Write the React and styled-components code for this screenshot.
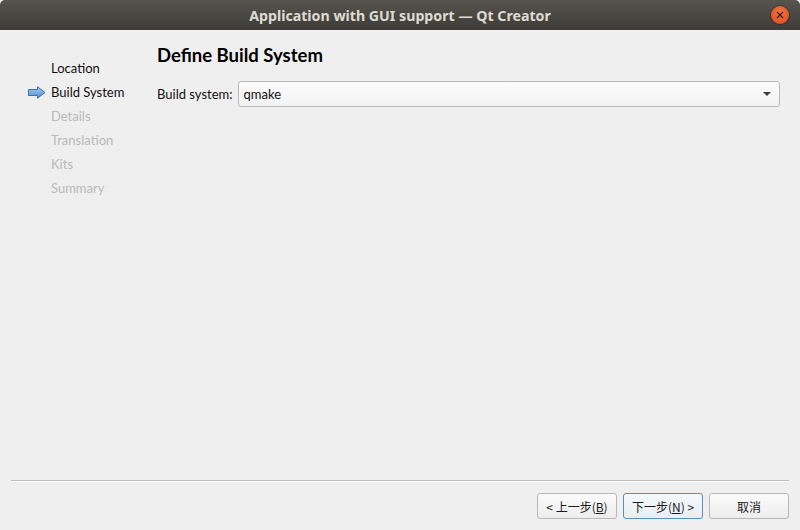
import React from "react";
import styled, { createGlobalStyle } from "styled-components";

const GlobalStyle = createGlobalStyle`
  html, body {
    margin: 0;
    padding: 0;
    background: #efefef;
  }
  body {
    font-family: Lato, "Noto Sans", "Noto Sans CJK SC", sans-serif;
    font-size: 13px;
    color: #101010;
  }
`;

const Window = styled.div`
  width: 800px;
  height: 530px;
  display: flex;
  flex-direction: column;
  background: #efefef;
  overflow: hidden;
`;

const TitleBar = styled.div`
  height: 30px;
  flex-shrink: 0;
  display: flex;
  align-items: center;
  justify-content: center;
  position: relative;
  background: linear-gradient(#57544e, #3d3c38);
  color: #dfdbd2;
  font-family: "Noto Sans", sans-serif;
  font-weight: bold;
  font-size: 14.2px;
  border-radius: 5px 5px 0 0;
`;

const CloseButton = styled.div`
  position: absolute;
  right: 11px;
  top: 6px;
  width: 18px;
  height: 18px;
  border-radius: 50%;
  background: radial-gradient(circle at 50% 35%, #f4733e, #dd4a18);
  display: flex;
  align-items: center;
  justify-content: center;
  box-shadow: 0 0 0 1px rgba(0, 0, 0, 0.25);
`;

const Main = styled.div`
  flex: 1;
  display: flex;
`;

const Sidebar = styled.div`
  width: 157px;
  flex-shrink: 0;
  padding-top: 26px;
  display: flex;
  flex-direction: column;
`;

const Step = styled.div`
  height: 24px;
  display: flex;
  align-items: center;
  padding-left: 28px;
  color: ${(p) => (p.$done || p.$current ? "#101010" : "#b9b9b9")};
`;

const ArrowSlot = styled.div`
  width: 23px;
  display: flex;
  align-items: center;
`;

const Page = styled.div`
  flex: 1;
  padding: 13px 20px 0 0;
  display: flex;
  flex-direction: column;
`;

const Heading = styled.h1`
  margin: 0;
  font-size: 18.5px;
  line-height: 24px;
  font-weight: bold;
  color: #000;
`;

const FieldRow = styled.div`
  margin-top: 14px;
  display: flex;
  align-items: center;
  gap: 6px;
`;

const Label = styled.span``;

const Combo = styled.div`
  flex: 1;
  height: 24px;
  border: 1px solid #b9b9b9;
  border-radius: 3px;
  background: linear-gradient(#fcfcfc, #f2f2f2);
  display: flex;
  align-items: center;
  justify-content: space-between;
  padding: 0 8px 0 4px;
`;

const Caret = styled.span`
  width: 0;
  height: 0;
  border-left: 4px solid transparent;
  border-right: 4px solid transparent;
  border-top: 4px solid #3a3a3a;
`;

const Footer = styled.div`
  flex-shrink: 0;
  padding: 0 11px 11px;
`;

const Separator = styled.div`
  border-top: 1px solid #bdbdbd;
  border-bottom: 1px solid #fafafa;
`;

const Buttons = styled.div`
  margin-top: 11px;
  display: flex;
  justify-content: flex-end;
  gap: 6px;
`;

const Button = styled.button`
  width: 80px;
  height: 26px;
  border-radius: 3px;
  border: 1px solid ${(p) => (p.$default ? "#5b8fbf" : "#b8b8b8")};
  background: ${(p) =>
    p.$default
      ? "linear-gradient(#f5f8fb, #e9eef3)"
      : "linear-gradient(#fbfbfb, #ededed)"};
  font-family: "Noto Sans CJK SC", "Noto Sans", sans-serif;
  font-size: 12px;
  color: #1a1a1a;
  padding: 0;
  display: flex;
  align-items: center;
  justify-content: center;
`;

const steps = ["Location", "Build System", "Details", "Translation", "Kits", "Summary"];
const current = 1;

function StepArrow() {
  return (
    <svg width="18" height="13" viewBox="0 0 18 13">
      <defs>
        <linearGradient id="ag" x1="0" y1="0" x2="0" y2="1">
          <stop offset="0" stopColor="#a9cdf3" />
          <stop offset="1" stopColor="#4f8ed6" />
        </linearGradient>
      </defs>
      <path
        d="M0.5 3.5 H9.5 V0.8 L17 6.5 L9.5 12.2 V9.5 H0.5 Z"
        fill="url(#ag)"
        stroke="#3b6fae"
        strokeWidth="1"
        strokeLinejoin="round"
      />
    </svg>
  );
}

export default function App() {
  return (
    <Window>
      <GlobalStyle />
      <TitleBar>
        Application with GUI support — Qt Creator
        <CloseButton>
          <svg width="8" height="8" viewBox="0 0 8 8">
            <path d="M1 1 L7 7 M7 1 L1 7" stroke="#3a1a0a" strokeWidth="1.3" />
          </svg>
        </CloseButton>
      </TitleBar>
      <Main>
        <Sidebar>
          {steps.map((s, i) => (
            <Step key={s} $done={i < current} $current={i === current}>
              <ArrowSlot>{i === current && <StepArrow />}</ArrowSlot>
              {s}
            </Step>
          ))}
        </Sidebar>
        <Page>
          <Heading>Define Build System</Heading>
          <FieldRow>
            <Label>Build system:</Label>
            <Combo>
              <span>qmake</span>
              <Caret />
            </Combo>
          </FieldRow>
        </Page>
      </Main>
      <Footer>
        <Separator />
        <Buttons>
          <Button>&lt; 上一步(<u>B</u>)</Button>
          <Button $default>下一步(<u>N</u>) &gt;</Button>
          <Button>取消</Button>
        </Buttons>
      </Footer>
    </Window>
  );
}
